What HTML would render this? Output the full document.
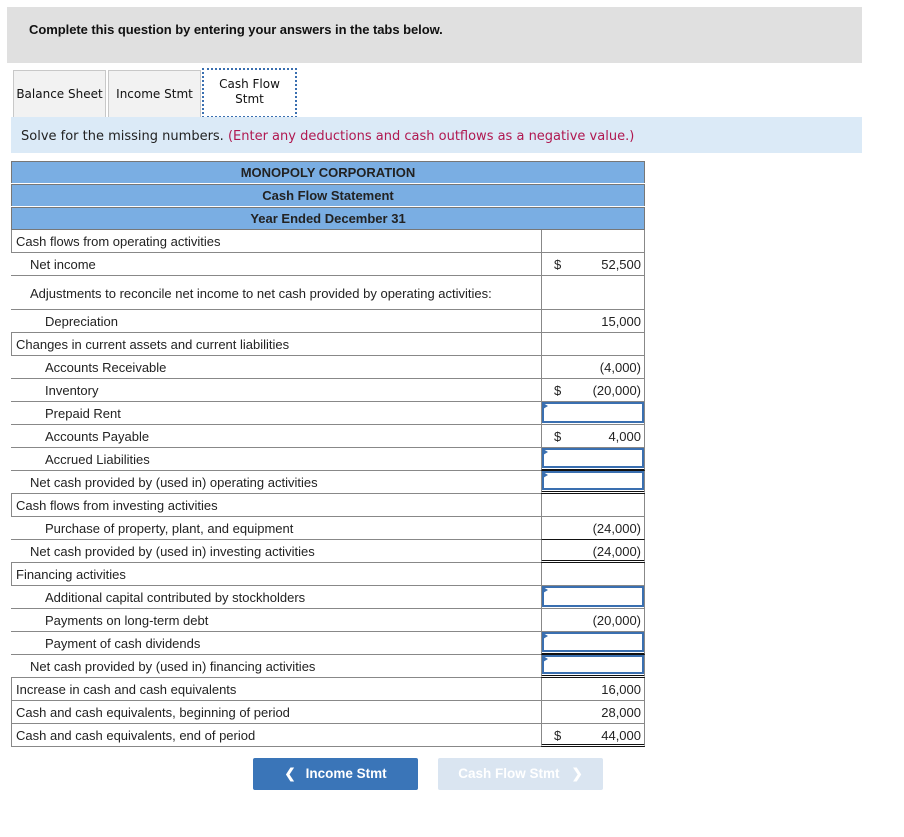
<!DOCTYPE html>
<html><head><meta charset="utf-8"><style>
body{margin:0;background:#fff;width:904px;height:837px;position:relative;overflow:hidden;font-family:"Liberation Sans",Arial,sans-serif;}
.abs{position:absolute;}
.top{left:7px;top:7px;width:855px;height:56px;background:#e0e0e0;}
.top span{position:absolute;left:22px;top:15px;font:bold 13px "Liberation Sans",sans-serif;letter-spacing:-0.05px;color:#111;}
.tab{position:absolute;top:70px;height:47px;background:#f2f2f2;border:1px solid #c8c8c8;border-bottom:none;font:12px "DejaVu Sans",Verdana,sans-serif;color:#111;display:flex;align-items:center;justify-content:center;text-align:center;box-sizing:border-box;}
.inst{left:11px;top:117px;width:851px;height:36px;background:#dbeaf7;font:13px "DejaVu Sans",Verdana,sans-serif;color:#222;}
.inst span.r{color:#b01850;}
.hdr{left:11px;width:634px;height:22px;background:#7aaee3;border:1px solid #777;border-bottom:none;box-sizing:border-box;text-align:center;font-size:13px;font-weight:bold;color:#222;line-height:22px;}
.row{position:absolute;left:11px;width:634px;font-size:13px;color:#222;}
.row .l{position:absolute;left:0;top:0;bottom:0;width:530px;border-bottom:1px solid #888;box-sizing:border-box;padding-top:4px;}
.row .r{position:absolute;left:530px;top:0;bottom:0;width:104px;border-left:1px solid #888;border-right:1px solid #888;border-bottom:1px solid #888;box-sizing:border-box;}
.r .d{position:absolute;left:12px;top:4px;}
.r .v{position:absolute;right:3px;top:4px;}
.inp{position:absolute;left:0;right:0;top:0;bottom:1px;border:2px solid #3a6fb0;background:#fff;}
.inp:before{content:"";position:absolute;left:-1px;top:-1px;border-left:5px solid #3a6fb0;border-top:3px solid transparent;border-bottom:3px solid transparent;}
.btn{position:absolute;top:758px;height:32px;border-radius:2px;font-weight:bold;font-size:13.5px;color:#fff;text-align:center;line-height:32px;}
</style></head><body>
<div class="abs top"><span>Complete this question by entering your answers in the tabs below.</span></div>
<div class="tab" style="left:13px;width:93px;">Balance Sheet</div>
<div class="tab" style="left:108px;width:93px;">Income Stmt</div>
<div class="tab" style="left:202px;top:68px;width:95px;height:50px;background:#fff;border:2px dotted #3a6fb0;border-bottom:2px dotted #3a6fb0;line-height:15px;padding-bottom:2px;">Cash Flow<br>Stmt</div>
<div class="abs inst"><div style="position:absolute;left:10px;top:12px;">Solve for the missing numbers. <span class="r">(Enter any deductions and cash outflows as a negative value.)</span></div></div>
<div class="abs hdr" style="top:161px;">MONOPOLY CORPORATION</div>
<div class="abs hdr" style="top:184px;">Cash Flow Statement</div>
<div class="abs hdr" style="top:207px;">Year Ended December 31</div>
<div class="abs" style="left:11px;top:229px;width:634px;border-top:1px solid #777;"></div>

<div class="row" style="top:230px;height:23px;"><div class="l" style="border-left:1px solid #888;padding-left:4px;">Cash flows from operating activities</div><div class="r"></div></div>
<div class="row" style="top:253px;height:23px;"><div class="l" style="padding-left:19px;">Net income</div><div class="r"><span class="d">$</span><span class="v">52,500</span></div></div>
<div class="row" style="top:276px;height:34px;"><div class="l" style="padding-left:19px;padding-top:10px;">Adjustments to reconcile net income to net cash provided by operating activities:</div><div class="r"></div></div>
<div class="row" style="top:310px;height:23px;"><div class="l" style="padding-left:34px;">Depreciation</div><div class="r"><span class="v">15,000</span></div></div>
<div class="row" style="top:333px;height:23px;"><div class="l" style="border-left:1px solid #888;padding-left:4px;">Changes in current assets and current liabilities</div><div class="r"></div></div>
<div class="row" style="top:356px;height:23px;"><div class="l" style="padding-left:34px;">Accounts Receivable</div><div class="r"><span class="v">(4,000)</span></div></div>
<div class="row" style="top:379px;height:23px;"><div class="l" style="padding-left:34px;">Inventory</div><div class="r"><span class="d">$</span><span class="v">(20,000)</span></div></div>
<div class="row" style="top:402px;height:23px;"><div class="l" style="padding-left:34px;">Prepaid Rent</div><div class="r"><div class="inp"></div></div></div>
<div class="row" style="top:425px;height:23px;"><div class="l" style="padding-left:34px;">Accounts Payable</div><div class="r"><span class="d">$</span><span class="v">4,000</span></div></div>
<div class="row" style="top:448px;height:23px;"><div class="l" style="padding-left:34px;">Accrued Liabilities</div><div class="r" style="border-bottom:2px solid #111;"><div class="inp"></div></div></div>
<div class="row" style="top:471px;height:23px;"><div class="l" style="padding-left:19px;">Net cash provided by (used in) operating activities</div><div class="r" style="border-bottom:3px double #111;"><div class="inp"></div></div></div>
<div class="row" style="top:494px;height:23px;"><div class="l" style="border-left:1px solid #888;padding-left:4px;">Cash flows from investing activities</div><div class="r"></div></div>
<div class="row" style="top:517px;height:23px;"><div class="l" style="padding-left:34px;">Purchase of property, plant, and equipment</div><div class="r" style="border-bottom:1px solid #111;"><span class="v">(24,000)</span></div></div>
<div class="row" style="top:540px;height:23px;"><div class="l" style="padding-left:19px;">Net cash provided by (used in) investing activities</div><div class="r" style="border-bottom:3px double #111;"><span class="v">(24,000)</span></div></div>
<div class="row" style="top:563px;height:23px;"><div class="l" style="border-left:1px solid #888;padding-left:4px;">Financing activities</div><div class="r"></div></div>
<div class="row" style="top:586px;height:23px;"><div class="l" style="padding-left:34px;">Additional capital contributed by stockholders</div><div class="r"><div class="inp"></div></div></div>
<div class="row" style="top:609px;height:23px;"><div class="l" style="padding-left:34px;">Payments on long-term debt</div><div class="r"><span class="v">(20,000)</span></div></div>
<div class="row" style="top:632px;height:23px;"><div class="l" style="padding-left:34px;">Payment of cash dividends</div><div class="r" style="border-bottom:2px solid #111;"><div class="inp"></div></div></div>
<div class="row" style="top:655px;height:23px;"><div class="l" style="padding-left:19px;">Net cash provided by (used in) financing activities</div><div class="r" style="border-bottom:3px double #111;"><div class="inp"></div></div></div>
<div class="row" style="top:678px;height:23px;"><div class="l" style="border-left:1px solid #888;padding-left:4px;">Increase in cash and cash equivalents</div><div class="r"><span class="v">16,000</span></div></div>
<div class="row" style="top:701px;height:23px;"><div class="l" style="border-left:1px solid #888;padding-left:4px;">Cash and cash equivalents, beginning of period</div><div class="r"><span class="v">28,000</span></div></div>
<div class="row" style="top:724px;height:23px;"><div class="l" style="border-left:1px solid #888;padding-left:4px;">Cash and cash equivalents, end of period</div><div class="r" style="border-bottom:3px double #111;"><span class="d">$</span><span class="v">44,000</span></div></div>

<div class="btn" style="left:253px;width:165px;background:#3a75b8;"><span style="margin-right:10px;">&#10094;</span>Income Stmt</div>
<div class="btn" style="left:438px;width:165px;background:#dae5f1;color:#fff;">Cash Flow Stmt<span style="margin-left:12px;">&#10095;</span></div>
</body></html>
